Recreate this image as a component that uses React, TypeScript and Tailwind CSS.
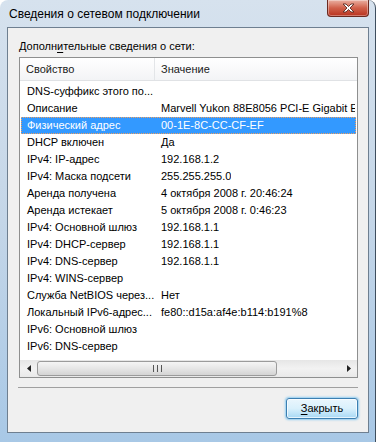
const rows: [string, string][] = [
  ['DNS-суффикс этого по...', ''],
  ['Описание', 'Marvell Yukon 88E8056 PCI-E Gigabit Ethernet Controller'],
  ['Физический адрес', '00-1E-8C-CC-CF-EF'],
  ['DHCP включен', 'Да'],
  ['IPv4: IP-адрес', '192.168.1.2'],
  ['IPv4: Маска подсети', '255.255.255.0'],
  ['Аренда получена', '4 октября 2008 г. 20:46:24'],
  ['Аренда истекает', '5 октября 2008 г. 0:46:23'],
  ['IPv4: Основной шлюз', '192.168.1.1'],
  ['IPv4: DHCP-сервер', '192.168.1.1'],
  ['IPv4: DNS-сервер', '192.168.1.1'],
  ['IPv4: WINS-сервер', ''],
  ['Служба NetBIOS через...', 'Нет'],
  ['Локальный IPv6-адрес...', 'fe80::d15a:af4e:b114:b191%8'],
  ['IPv6: Основной шлюз', ''],
  ['IPv6: DNS-сервер', ''],
]

function CloseButton() {
  return (
    <div className="flex h-[17px] w-[42px] items-center justify-center rounded-b-[4px] border border-t-0 border-[#6b2a20] bg-gradient-to-b from-[#e9b0a2] via-[#d0604a] to-[#b8301c] shadow-[inset_0_0_0_1px_rgba(255,255,255,0.35)]">
      <svg width="13" height="10" viewBox="0 0 13 10">
        <path
          d="M1 1 H4 L6.5 3.5 L9 1 H12 L8 5 L12 9 H9 L6.5 6.5 L4 9 H1 L5 5 Z"
          fill="#ffffff"
          stroke="#5a2a22"
          strokeWidth="0.9"
          strokeLinejoin="round"
        />
      </svg>
    </div>
  )
}

function ScrollBar() {
  return (
    <div className="flex h-[17px] shrink-0 items-center bg-gradient-to-b from-[#e6e6e6] via-[#f2f2f2] to-[#e9e9e9]">
      <div className="flex h-full w-[17px] items-center justify-center">
        <svg width="4" height="7" viewBox="0 0 4 7">
          <path d="M4 0 L0 3.5 L4 7 Z" fill="#222" />
        </svg>
      </div>
      <div className="flex h-[15px] w-[240px] items-center justify-center rounded-[3px] border border-[#9b9b9b] bg-gradient-to-b from-[#f5f5f5] via-[#e6e6e6] to-[#d4d4d4]">
        <div className="flex gap-[1px]">
          <div className="h-[7px] w-[1px] bg-[#555]" />
          <div className="h-[7px] w-[1px] bg-[#e8e8e8]" />
          <div className="h-[7px] w-[1px] bg-[#555]" />
          <div className="h-[7px] w-[1px] bg-[#e8e8e8]" />
          <div className="h-[7px] w-[1px] bg-[#555]" />
        </div>
      </div>
      <div className="flex-1" />
      <div className="flex h-full w-[17px] items-center justify-center">
        <svg width="4" height="7" viewBox="0 0 4 7">
          <path d="M0 0 L4 3.5 L0 7 Z" fill="#222" />
        </svg>
      </div>
    </div>
  )
}

export default function App() {
  return (
    <div
      className="flex h-[442px] w-[376px] flex-col overflow-hidden rounded-t-[8px] border-r border-[#3e4e5e] bg-gradient-to-b from-[#d6e2ee] via-[#c4d6e8] to-[#a8c8e6] text-[11px] text-black"
      style={{ fontFamily: '"Liberation Sans", Arial, sans-serif' }}
    >
      {/* заголовок окна */}
      <div className="flex h-[27px] shrink-0 items-start pl-[9px]">
        <span className="mt-[7px] text-[12px] leading-[15px] text-black">Сведения о сетевом подключении</span>
        <div className="ml-auto mr-[6px]">
          <CloseButton />
        </div>
      </div>

      {/* клиентская область */}
      <div className="ml-[7px] flex h-[406px] w-[362px] flex-col border border-[#6e7f90] bg-[#f0f0f0]">
        <div className="pl-[11px] pt-[11px] leading-[15px]">
          Дополн<span className="underline underline-offset-2">и</span>тельные сведения о сети:
        </div>

        <div className="ml-[11px] mt-[3px] flex h-[321px] w-[339px] flex-col border border-[#8e8f8f] bg-white">
          <div className="flex h-[23px] shrink-0 items-center border-b border-[#e0e2e5] bg-gradient-to-b from-white to-[#f3f4f6] text-[#1a1a1a]">
            <div className="flex h-full w-[135px] items-center border-r border-[#e3e5e8] pl-[6px]">Свойство</div>
            <div className="pl-[6px]">Значение</div>
          </div>

          <div className="flex-1 overflow-hidden pt-[2px]">
            {rows.map(([name, value], i) => {
              const selected = i === 2
              return (
                <div
                  key={name}
                  className={
                    selected
                      ? 'mx-[1px] flex h-[17px] items-center whitespace-nowrap border border-dotted border-[#f0a060] bg-[#3399ff] text-white'
                      : 'mx-[1px] flex h-[17px] items-center whitespace-nowrap border border-transparent'
                  }
                >
                  <div className="w-[133px] shrink-0 overflow-hidden pl-[5px]">{name}</div>
                  <div className="overflow-hidden pl-[6px]">{value}</div>
                </div>
              )
            })}
          </div>

          <ScrollBar />
        </div>

        <div className="ml-[10px] mt-[9px] h-[2px] w-[340px] border-t border-[#a0a0a0] border-b-white" />

        <div className="mt-[9px] flex justify-end pr-[10px]">
          <button className="flex h-[21px] w-[72px] items-center justify-center rounded-[3px] border border-[#3c7fb1] bg-gradient-to-b from-[#eaf6fd] via-[#d9f0fc] to-[#a7d9f5] leading-none text-black shadow-[0_0_2px_1px_rgba(80,180,240,0.6),inset_0_0_0_1px_rgba(255,255,255,0.7)]">
            <span className="underline underline-offset-2">З</span>акрыть
          </button>
        </div>
      </div>
    </div>
  )
}
